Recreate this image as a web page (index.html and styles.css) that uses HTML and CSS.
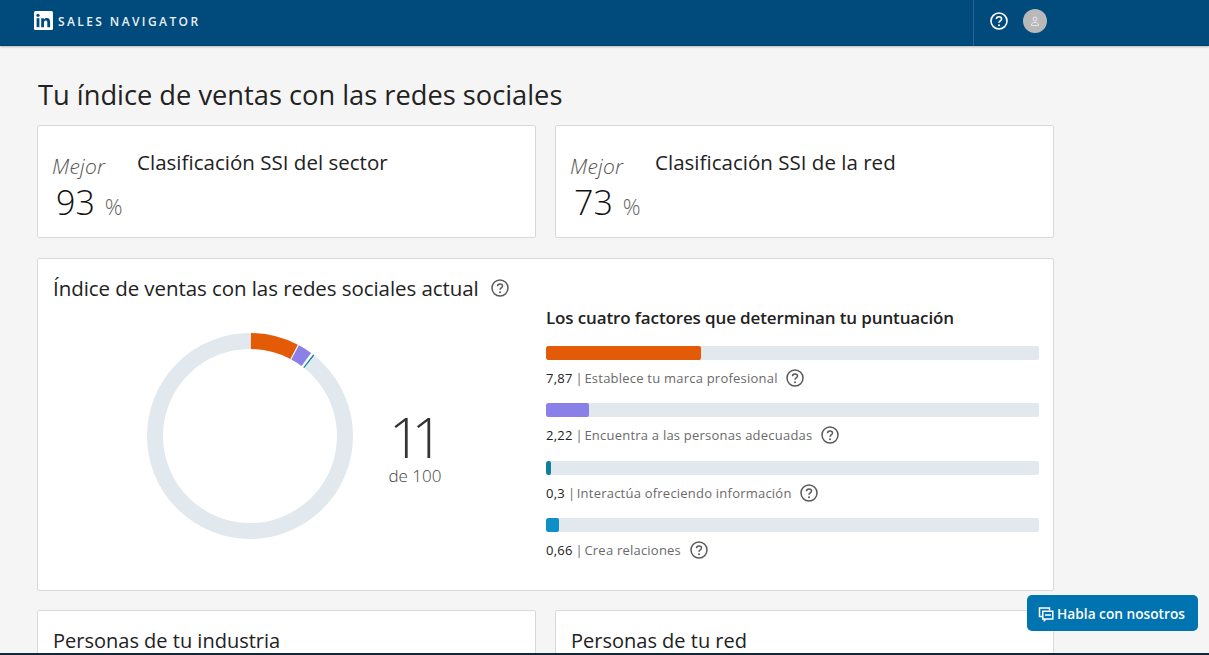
FILE: index.html
```html
<!DOCTYPE html>
<html lang="es">
<head>
  <meta charset="UTF-8">
  <title>Sales Navigator</title>
  <link rel="stylesheet" href="styles.css">
</head>
<body>
  <header class="topbar">
    <div class="brand">
      <svg class="brand-logo" viewBox="0 0 19 19" width="19" height="19">
        <rect width="19" height="19" rx="1.5" fill="#fff"/>
        <rect x="2.6" y="7.2" width="2.8" height="9" fill="#004b7c"/>
        <circle cx="4" cy="4.3" r="1.6" fill="#004b7c"/>
        <path d="M7.2 7.2h2.7v1.3c.5-.9 1.5-1.5 2.8-1.5 2.6 0 3.4 1.6 3.4 4.1v5.1h-2.8v-4.6c0-1.2-.3-2.1-1.4-2.1-1.2 0-1.9.8-1.9 2.2v4.5H7.2z" fill="#004b7c"/>
      </svg>
      <span class="brand-name">SALES NAVIGATOR</span>
    </div>
    <div class="topbar-actions">
      <svg class="top-help" viewBox="0 0 18 18" width="18" height="18">
        <circle cx="9" cy="9" r="8" fill="none" stroke="#fff" stroke-width="1.6"/>
        <path d="M6.4 7.1c0-1.5 1.1-2.4 2.6-2.4s2.6.9 2.6 2.2c0 1.9-2.6 2-2.6 3.9" fill="none" stroke="#fff" stroke-width="1.6"/>
        <circle cx="9" cy="13.3" r="1" fill="#fff"/>
      </svg>
      <div class="avatar">
        <svg viewBox="0 0 12 12" width="12" height="12">
          <circle cx="6" cy="4" r="2" fill="none" stroke="#e6e6e6" stroke-width="1"/>
          <path d="M2.5 10.5V9l2-1.5h3l2 1.5v1.5z" fill="none" stroke="#e6e6e6" stroke-width="1"/>
        </svg>
      </div>
    </div>
  </header>

  <main class="content">
    <h1 class="page-title">Tu índice de ventas con las redes sociales</h1>

    <div class="row">
      <section class="card rank-card">
        <div class="rank-left">
          <div class="rank-label">Mejor</div>
          <div class="rank-value">93 <span class="rank-unit">%</span></div>
        </div>
        <h2 class="card-title">Clasificación SSI del sector</h2>
      </section>
      <section class="card rank-card">
        <div class="rank-left">
          <div class="rank-label">Mejor</div>
          <div class="rank-value">73 <span class="rank-unit">%</span></div>
        </div>
        <h2 class="card-title">Clasificación SSI de la red</h2>
      </section>
    </div>

    <section class="card score-card">
      <div class="score-left">
        <h2 class="score-title">Índice de ventas con las redes sociales actual
          <svg class="help" viewBox="0 0 18 18" width="18" height="18"><use href="#help-icon"/></svg>
        </h2>
        <div class="donut-wrap">
          <svg class="donut" viewBox="0 0 206 206" width="206" height="206">
            <circle class="ring ring-bg" cx="103" cy="103" r="95" pathLength="360"/>
            <circle class="ring ring-gap" cx="103" cy="103" r="95" pathLength="360" stroke-dasharray="39 321"/>
            <circle class="ring" cx="103" cy="103" r="95" pathLength="360" stroke="#e35b06" stroke-dasharray="27.2 332.8" stroke-dashoffset="-0.5"/>
            <circle class="ring" cx="103" cy="103" r="95" pathLength="360" stroke="#8b7fe8" stroke-dasharray="8 352" stroke-dashoffset="-28.4"/>
            <circle class="ring" cx="103" cy="103" r="95" pathLength="360" stroke="#1a86ad" stroke-dasharray="0.9 359.1" stroke-dashoffset="-37.8"/>
          </svg>
          <div class="score">
            <div class="score-num">11</div>
            <div class="score-of">de 100</div>
          </div>
        </div>
      </div>

      <div class="factors">
        <h3 class="factors-title">Los cuatro factores que determinan tu puntuación</h3>
        <div class="factor">
          <div class="bar"><div class="bar-fill fill-orange" style="width: 31.5%"></div></div>
          <p class="factor-text"><b>7,87</b><span class="sep">|</span>Establece tu marca profesional <svg class="help" viewBox="0 0 18 18" width="18" height="18"><use href="#help-icon"/></svg></p>
        </div>
        <div class="factor">
          <div class="bar"><div class="bar-fill fill-purple" style="width: 8.8%"></div></div>
          <p class="factor-text"><b>2,22</b><span class="sep">|</span>Encuentra a las personas adecuadas <svg class="help" viewBox="0 0 18 18" width="18" height="18"><use href="#help-icon"/></svg></p>
        </div>
        <div class="factor">
          <div class="bar"><div class="bar-fill fill-teal" style="width: 1%"></div></div>
          <p class="factor-text"><b>0,3</b><span class="sep">|</span>Interactúa ofreciendo información <svg class="help" viewBox="0 0 18 18" width="18" height="18"><use href="#help-icon"/></svg></p>
        </div>
        <div class="factor">
          <div class="bar"><div class="bar-fill fill-blue" style="width: 2.6%"></div></div>
          <p class="factor-text"><b>0,66</b><span class="sep">|</span>Crea relaciones <svg class="help" viewBox="0 0 18 18" width="18" height="18"><use href="#help-icon"/></svg></p>
        </div>
      </div>
    </section>

    <div class="row">
      <section class="card people-card"><h2 class="people-title">Personas de tu industria</h2></section>
      <section class="card people-card"><h2 class="people-title">Personas de tu red</h2></section>
    </div>
  </main>

  <button class="chat-btn">
    <svg viewBox="0 0 16 16" width="16" height="16">
      <path d="M4 10.5H1.5V2h10v2.5" fill="none" stroke="#fff" stroke-width="1.5"/>
      <path d="M4.8 5.3h10v7.6H8l-1.6 1.6v-1.6H4.8z" fill="none" stroke="#fff" stroke-width="1.5"/>
      <path d="M7 9h6" stroke="#fff" stroke-width="1.5"/>
    </svg>
    Habla con nosotros
  </button>
  <div class="bottom-line"></div>

  <svg class="icon-defs" width="0" height="0">
    <symbol id="help-icon" viewBox="0 0 18 18">
      <circle cx="9" cy="9" r="8" fill="none" stroke="#5a5a5a" stroke-width="1.5"/>
      <path d="M6.5 7.2c0-1.5 1.1-2.3 2.5-2.3s2.5.8 2.5 2.1c0 1.9-2.5 2-2.5 3.8" fill="none" stroke="#5a5a5a" stroke-width="1.5"/>
      <circle cx="9" cy="13.2" r="1" fill="#5a5a5a"/>
    </symbol>
  </svg>
</body>
</html>
```

FILE: styles.css
```css
* {
  margin: 0;
  padding: 0;
  box-sizing: border-box;
}

html, body {
  height: 655px;
  overflow: hidden;
}

body {
  background-color: #f5f5f5;
  font-family: 'Open Sans', sans-serif;
  color: #1f1f1f;
}

.topbar {
  height: 46px;
  background-color: #004b7c;
  border-bottom: 1px solid #00416c;
  box-shadow: 0 1px 2px rgba(0, 0, 0, 0.25);
  display: flex;
  align-items: center;
  justify-content: space-between;
  padding: 0 162px 4px 34px;
}

.brand {
  display: flex;
  align-items: center;
  gap: 5px;
}

.brand-logo {
  display: block;
}

.brand-name {
  color: #e8f0f5;
  font-size: 12px;
  font-weight: 600;
  letter-spacing: 2.4px;
  margin-top: 1px;
}

.topbar-actions {
  display: flex;
  align-items: center;
  gap: 15px;
  height: 46px;
  margin-bottom: -4px;
  padding: 0 0 4px 16px;
  border-left: 1px solid #266591;
}

.top-help {
  display: block;
}

.avatar {
  width: 24px;
  height: 24px;
  border-radius: 50%;
  background-color: #b9b9b9;
  display: flex;
  align-items: center;
  justify-content: center;
}

.content {
  width: 1017px;
  height: 609px;
  margin-left: 37px;
  overflow: hidden;
}

.page-title {
  font-size: 27.25px;
  font-weight: 400;
  line-height: 36px;
  margin: 31px 0 12px 1px;
  color: #222;
}

.row {
  display: flex;
  gap: 19px;
}

.card {
  background-color: #fff;
  border: 1px solid #d9d9d9;
  border-radius: 2px;
}

.rank-card {
  flex: 1;
  height: 113px;
  display: flex;
  padding: 23px 15px 0 14px;
}

.rank-left {
  width: 85px;
  padding-top: 2px;
}

.rank-label {
  font-size: 21px;
  font-style: italic;
  font-weight: 300;
  line-height: 30px;
  color: #555;
  letter-spacing: 0.2px;
}

.rank-value {
  font-size: 34px;
  font-weight: 300;
  line-height: 42px;
  padding-left: 4px;
  white-space: nowrap;
  color: #111;
}

.rank-unit {
  font-size: 22px;
  color: #666;
  margin-left: 1px;
}

.card-title {
  font-size: 20.5px;
  font-weight: 400;
  line-height: 26px;
  color: #222;
  letter-spacing: 0.02px;
}

.score-title {
  font-size: 20.5px;
  font-weight: 400;
  line-height: 26px;
  color: #222;
  letter-spacing: -0.07px;
  display: flex;
  align-items: center;
  gap: 12px;
}

.people-title {
  font-size: 20px;
  font-weight: 400;
  line-height: 26px;
  color: #222;
}

.score-card {
  height: 333px;
  margin: 20px 0 19px;
  display: flex;
  padding: 16px 14px 0 15px;
}

.score-left {
  width: 493px;
}

.help {
  display: inline-block;
  vertical-align: -4px;
  margin-left: 5px;
}

.score-title .help {
  margin-left: 0;
}

.donut-wrap {
  display: flex;
  align-items: center;
  padding: 32px 0 0 94px;
}

.donut {
  display: block;
}

.ring {
  fill: none;
  stroke-width: 16;
  transform: rotate(-90deg);
  transform-origin: 103px 103px;
}

.ring-bg {
  stroke: #e1e9ef;
}

.ring-gap {
  stroke: #fff;
}

.score {
  margin: 28px 0 0 35px;
  text-align: center;
  width: 54px;
}

.score-num {
  font-size: 56px;
  font-weight: 300;
  line-height: 46px;
  letter-spacing: -9.5px;
  padding-right: 7px;
  color: #333;
}

.score-of {
  font-size: 17px;
  line-height: 22px;
  font-weight: 300;
  color: #444;
  white-space: nowrap;
  margin: 6px -6px 0;
}

.factors {
  flex: 1;
  padding-top: 31px;
}

.factors-title {
  font-size: 17px;
  font-weight: 600;
  line-height: 24px;
  color: #222;
  letter-spacing: -0.13px;
  margin-bottom: 16px;
}

.factor {
  height: 57.4px;
}

.bar {
  height: 14px;
  background-color: #e1e9ef;
  border-radius: 2px;
  overflow: hidden;
}

.bar-fill {
  height: 100%;
  border-radius: 2px;
}

.fill-orange { background-color: #e35b06; }
.fill-purple { background-color: #8b7fe8; }
.fill-teal { background-color: #0f7f9a; }
.fill-blue { background-color: #0e8fc9; }

.factor-text {
  font-size: 13px;
  line-height: 20px;
  margin-top: 8px;
  color: #6a6a6a;
  letter-spacing: 0.22px;
}

.factor-text b {
  font-weight: 500;
  color: #222;
}

.sep {
  margin: 0 1.5px 0 3px;
}

.people-card {
  flex: 1;
  height: 80px;
  padding: 17px 15px 0;
}

.chat-btn {
  position: fixed;
  left: 1027px;
  top: 595px;
  width: 171px;
  height: 36px;
  padding: 1px 2px 0 0;
  background-color: #0073b1;
  color: #fff;
  border: none;
  border-radius: 5px;
  font-family: 'Open Sans', sans-serif;
  font-size: 13.7px;
  font-weight: 600;
  display: flex;
  align-items: center;
  justify-content: center;
  gap: 3px;
}

.bottom-line {
  position: fixed;
  left: 0;
  right: 0;
  bottom: 0;
  height: 2px;
  background-color: #12263a;
}

.icon-defs {
  position: absolute;
}
```
